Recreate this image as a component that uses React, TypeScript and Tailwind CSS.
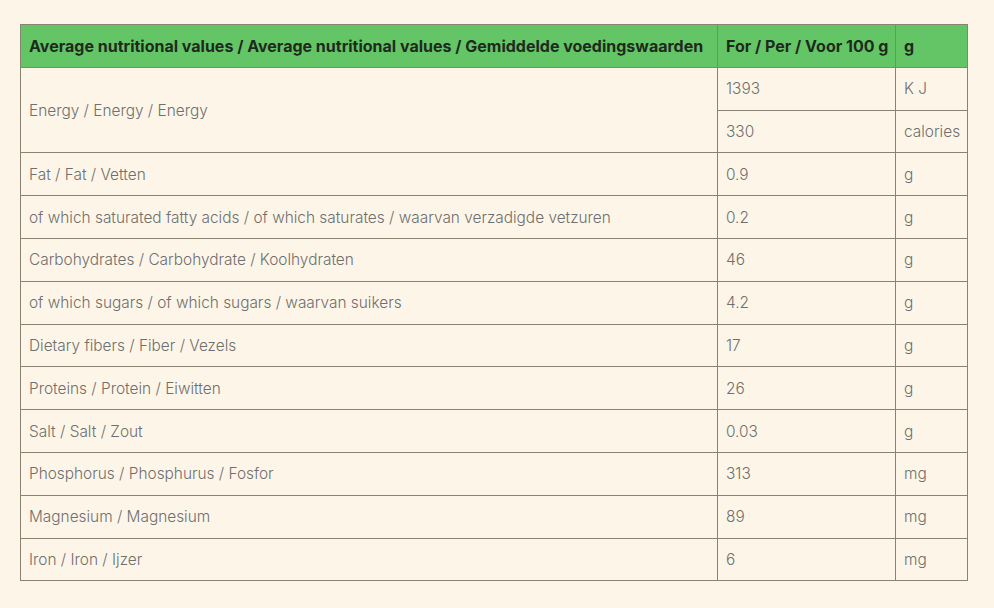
const rows: [string, string, string][] = [
  ["Fat / Fat / Vetten", "0.9", "g"],
  ["of which saturated fatty acids / of which saturates / waarvan verzadigde vetzuren", "0.2", "g"],
  ["Carbohydrates / Carbohydrate / Koolhydraten", "46", "g"],
  ["of which sugars / of which sugars / waarvan suikers", "4.2", "g"],
  ["Dietary fibers / Fiber / Vezels", "17", "g"],
  ["Proteins / Protein / Eiwitten", "26", "g"],
  ["Salt / Salt / Zout", "0.03", "g"],
  ["Phosphorus / Phosphurus / Fosfor", "313", "mg"],
  ["Magnesium / Magnesium", "89", "mg"],
  ["Iron / Iron / Ijzer", "6", "mg"],
];

const cell = "border border-[#8a8371] px-2 h-[42.8px] align-middle text-left whitespace-nowrap";

export default function App() {
  return (
    <div className="min-h-[608px] w-full bg-[#fdf6e8] pt-6 pl-5 font-['Inter',sans-serif] text-[15.4px] font-light text-[#6f6f6f]">
      <table className="w-[947px] border-collapse table-fixed">
        <colgroup>
          <col className="w-[697px]" />
          <col className="w-[178px]" />
          <col className="w-[72px]" />
        </colgroup>
        <thead>
          <tr className="bg-[#64c567] text-[#1f2a1c] font-bold text-[16px]">
            <th className={cell}>Average nutritional values / Average nutritional values / Gemiddelde voedingswaarden</th>
            <th className={cell}>For / Per / Voor 100 g</th>
            <th className={cell}>g</th>
          </tr>
        </thead>
        <tbody>
          <tr>
            <td className={cell} rowSpan={2}>Energy / Energy / Energy</td>
            <td className={cell}>1393</td>
            <td className={cell}>K J</td>
          </tr>
          <tr>
            <td className={cell}>330</td>
            <td className={cell}>calories</td>
          </tr>
          {rows.map((r, i) => (
            <tr key={i}>
              <td className={cell}>{r[0]}</td>
              <td className={cell}>{r[1]}</td>
              <td className={cell}>{r[2]}</td>
            </tr>
          ))}
        </tbody>
      </table>
    </div>
  );
}
